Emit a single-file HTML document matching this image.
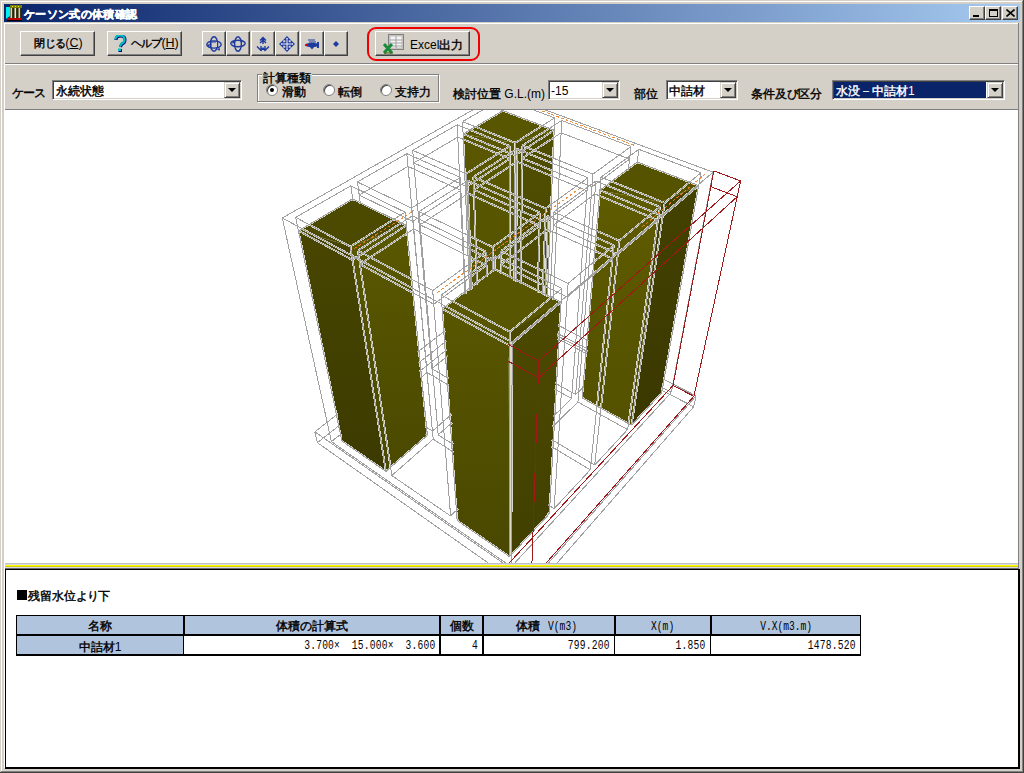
<!DOCTYPE html>
<html><head><meta charset="utf-8">
<style>
@font-face{font-family:"LJ";src:local("Liberation Sans");unicode-range:U+3000-30FF,U+3400-9FFF,U+FF00-FFEF;size-adjust:130%}
@font-face{font-family:"LJ";font-weight:bold;src:local("Liberation Sans Bold");unicode-range:U+3000-30FF,U+3400-9FFF,U+FF00-FFEF;size-adjust:130%}
.j{-webkit-text-stroke:.4px}
.k{letter-spacing:-.08em;-webkit-text-stroke:.4px}
.t .k,.t .j{letter-spacing:.03em}
*{margin:0;padding:0;box-sizing:border-box}
html,body{width:1024px;height:773px;overflow:hidden;background:#D4D0C8;font-family:"LJ","Liberation Sans",sans-serif;font-size:12px;color:#000}
.a{position:absolute}
.btn{position:absolute;background:#D4D0C8;border-top:1px solid #fff;border-left:1px solid #fff;border-right:1px solid #404040;border-bottom:1px solid #404040;box-shadow:inset -1px -1px 0 #808080}
.combo{position:absolute;background:#fff;border-top:1px solid #808080;border-left:1px solid #808080;border-right:1px solid #fff;border-bottom:1px solid #fff;box-shadow:inset 1px 1px 0 #404040,inset -1px -1px 0 #D4D0C8}
.dd{position:absolute;top:1px;right:1px;width:16px;height:16px;background:#D4D0C8;border-top:1px solid #D4D0C8;border-left:1px solid #D4D0C8;border-right:1px solid #404040;border-bottom:1px solid #404040;box-shadow:inset 1px 1px 0 #fff,inset -1px -1px 0 #808080}
.dd:after{content:"";position:absolute;left:3px;top:5px;border-left:4px solid transparent;border-right:4px solid transparent;border-top:4px solid #000}
.lbl{position:absolute;font-size:12px;line-height:14px;white-space:nowrap;margin-top:1px}
.radio{position:absolute;width:12px;height:12px;border-radius:50%;background:#fff;border:1px solid #808080;box-shadow:inset 1px 1px 0 #404040}
.th{position:absolute;background:#B0C4DE;text-align:center;font-size:12px;line-height:17px;padding-top:2px}
.td{position:absolute;background:#fff;text-align:right;font-family:"Liberation Mono",monospace;font-size:13px;line-height:18px;padding-right:4px;padding-top:1px;white-space:nowrap}
.td span{display:inline-block;transform:scaleX(.74);transform-origin:100% 50%;letter-spacing:.3px}
.x{font-weight:normal;letter-spacing:8px}
.m{font-family:"Liberation Mono",monospace;font-size:13px;display:inline-block;transform:scaleX(.74);transform-origin:50% 50%}
</style></head><body>
<!-- window frame -->
<div class="a" style="left:1px;top:1px;width:1021px;height:1px;background:#fff"></div>
<div class="a" style="left:1px;top:1px;width:1px;height:770px;background:#fff"></div>
<div class="a" style="left:1022px;top:1px;width:1px;height:771px;background:#808080"></div>
<div class="a" style="left:1023px;top:0;width:1px;height:773px;background:#404040"></div>
<div class="a" style="left:1px;top:771px;width:1022px;height:1px;background:#808080"></div>
<div class="a" style="left:0;top:772px;width:1024px;height:1px;background:#404040"></div>

<!-- title bar -->
<div class="a" style="left:4px;top:4px;width:1016px;height:18px;background:linear-gradient(to right,#0A246A,#A6CAF0)"></div>
<div class="a" id="ticon" style="left:6px;top:5px;width:16px;height:16px"><svg width="16" height="16"><polygon points="0,2 4,2 4,11 0,14" fill="#00F0F0"/><rect x="4" y="0" width="12" height="3" fill="#7A7A00"/><rect x="6" y="1" width="1" height="1" fill="#E8E800"/><rect x="9" y="1" width="1" height="1" fill="#E8E800"/><rect x="12" y="1" width="1" height="1" fill="#E8E800"/><rect x="4" y="3" width="12" height="10" fill="#2A2A00"/><rect x="4.5" y="3" width="1.6" height="10" fill="#D8D8D8"/><rect x="8.5" y="3" width="1.6" height="10" fill="#E8E8E8"/><rect x="12.5" y="3" width="1.6" height="10" fill="#C8C8C8"/><rect x="1" y="13" width="15" height="2" fill="#C00000"/><rect x="1" y="15" width="15" height="1" fill="#000"/></svg></div>
<div class="lbl t" style="left:24px;top:6px;color:#fff;font-weight:bold;font-size:11.3px"><span class="k">ケーソン</span><span class="j">式</span><span class="k">の</span><span class="j">体積確認</span></div>
<div class="btn" style="left:969px;top:6px;width:16px;height:14px"><div class="a" style="left:3px;top:8px;width:6px;height:2px;background:#000"></div></div>
<div class="btn" style="left:985px;top:6px;width:16px;height:14px"><div class="a" style="left:3px;top:2px;width:9px;height:8px;border:1px solid #000;border-top-width:2px"></div></div>
<div class="btn" style="left:1002px;top:6px;width:16px;height:14px"><svg class="a" style="left:3px;top:2px" width="9" height="8"><path d="M0.5 0.5L8.5 7.5M8.5 0.5L0.5 7.5" stroke="#000" stroke-width="1.6"/></svg></div>

<!-- client edge lines -->
<div class="a" style="left:4px;top:23px;width:1015px;height:1px;background:#fff"></div>
<div class="a" style="left:4px;top:23px;width:1px;height:745px;background:#fff"></div>
<div class="a" style="left:1018px;top:23px;width:1px;height:745px;background:#808080"></div>

<!-- toolbar -->
<div class="a" style="left:5px;top:63px;width:1013px;height:1px;background:#808080"></div>
<div class="a" style="left:5px;top:64px;width:1013px;height:1px;background:#fff"></div>
<div class="btn" style="left:20px;top:31px;width:75px;height:25px"><div class="lbl" style="left:13px;top:3px;font-size:11px"><span class="j">閉</span><span class="k">じる</span><span style="font-size:12.5px">(<u>C</u>)</span></div></div>
<div class="btn" style="left:107px;top:31px;width:75px;height:25px">
<svg class="a" style="left:5px;top:3px" width="14" height="18"><path d="M3 5 Q3 1 7.5 1 Q12 1 12 5 Q12 8 8.5 9.5 L7.5 12" fill="none" stroke="#000080" stroke-width="3"/><path d="M2.5 4.5 Q2.5 0.5 7 0.5 Q11.5 0.5 11.5 4.5 Q11.5 7.5 8 9 L7 11.5" fill="none" stroke="#00C0C0" stroke-width="2.2"/><rect x="5.5" y="14" width="3.5" height="3" fill="#000080"/><rect x="5" y="13.5" width="3" height="2.5" fill="#00C0C0"/></svg>
<div class="lbl" style="left:23px;top:3px;font-size:11px"><span class="k">ヘルプ</span><span style="font-size:12.5px">(<u>H</u>)</span></div></div>
<div class="btn" style="left:202px;top:31px;width:24px;height:25px"><svg class="a" style="left:3px;top:4px" width="16" height="16"><ellipse cx="8" cy="8" rx="3.6" ry="7.2" fill="none" stroke="#1E3A9E" stroke-width="1.4"/><ellipse cx="8" cy="8.5" rx="7.2" ry="3.6" fill="none" stroke="#1E3A9E" stroke-width="1.4"/><rect x="5" y="6" width="6" height="5" fill="#D4D0C8"/><path d="M5 6 H10 M5 6 V11" stroke="#1E3A9E" stroke-width="1.2"/><path d="M0.5 9 L3 11.5 L4 8Z M11 14 L13.5 11.5 L14 14.5Z" fill="#1E3A9E"/></svg></div>
<div class="btn" style="left:226px;top:31px;width:24px;height:25px"><svg class="a" style="left:3px;top:4px" width="16" height="16"><ellipse cx="8" cy="8" rx="3.4" ry="7.2" fill="none" stroke="#1E3A9E" stroke-width="1.4"/><ellipse cx="8" cy="7.5" rx="7.2" ry="3.2" fill="none" stroke="#1E3A9E" stroke-width="1.4"/><path d="M10 2.5 L13 5 L10.5 6Z M2 7.5 L3.5 4.5 L5 7Z" fill="#1E3A9E"/></svg></div>
<div class="btn" style="left:251px;top:31px;width:24px;height:25px"><svg class="a" style="left:3px;top:4px" width="16" height="16"><path d="M8 1 V8 M5 4.5 L8 1.5 L11 4.5 M5 7 L8 4 L11 7 M2 10.5 L6 14.5 L8 12 L10 14.5 L14 10.5 M6 10 V14 M10 10 V14" fill="none" stroke="#1E3A9E" stroke-width="1.4"/></svg></div>
<div class="btn" style="left:275px;top:31px;width:24px;height:25px"><svg class="a" style="left:3px;top:4px" width="16" height="16"><path d="M8 0.8 L10.6 3.6 H9.1 V6.9 H12.4 V5.4 L15.2 8 L12.4 10.6 V9.1 H9.1 V12.4 H10.6 L8 15.2 L5.4 12.4 H6.9 V9.1 H3.6 V10.6 L0.8 8 L3.6 5.4 V6.9 H6.9 V3.6 H5.4Z" fill="#F4F4FF" stroke="#1E3A9E" stroke-width="1.2"/></svg></div>
<div class="btn" style="left:300px;top:31px;width:24px;height:25px"><svg class="a" style="left:3px;top:4px" width="16" height="16"><path d="M4 4 H11 M5 6 H12" stroke="#1E3A9E" stroke-width="1.2"/><ellipse cx="8" cy="9" rx="7.2" ry="2.2" fill="#1E3A9E"/><rect x="13" y="6" width="2" height="6" fill="#1E3A9E"/><path d="M6 11 L8 13.5 L10 11Z" fill="#1E3A9E"/><rect x="1.5" y="8" width="2" height="2" fill="#E00000"/></svg></div>
<div class="btn" style="left:324px;top:31px;width:24px;height:25px"><svg class="a" style="left:3px;top:4px" width="16" height="16"><path d="M8 5 L11 8 L8 11 L5 8Z" fill="#1E3A9E"/></svg></div>
<div class="a" style="left:367px;top:27px;width:113px;height:34px;border:2px solid #F00000;border-radius:9px"></div>
<div class="btn" style="left:375px;top:31px;width:95px;height:25px">
<svg class="a" style="left:7px;top:2px" width="24" height="21"><rect x="5.5" y="0.5" width="15" height="15" fill="#D4D0C8" stroke="#808080"/><rect x="7" y="2" width="12" height="12" fill="#F4F4F4" stroke="#A0A0A0" stroke-width="0.6"/><path d="M7 6 H19 M7 9 H19 M7 12 H19 M13 2 V14" stroke="#909090" stroke-width="0.8"/><path d="M1 10 L9 19 M9 10 L1 19" stroke="#1C8C3C" stroke-width="3"/><path d="M1 19 H10" stroke="#406000" stroke-width="1"/></svg>
<div class="lbl" style="left:34px;top:5px">Excel<span class="j">出力</span></div></div>


<!-- combo row -->
<div class="a" style="left:5px;top:109px;width:1013px;height:1px;background:#808080"></div>
<div class="lbl" style="left:12px;top:85px"><span class="k">ケース</span></div>
<div class="combo" style="left:52px;top:80px;width:190px;height:20px"><div class="lbl" style="left:3px;top:2px"><span class="j">永続状態</span></div><div class="dd"></div></div>
<div class="a" style="left:257px;top:74px;width:182px;height:28px;border:1px solid #808080;box-shadow:1px 1px 0 #fff, inset 1px 1px 0 #fff"></div>
<div class="lbl" style="left:262px;top:70px;background:#D4D0C8;padding:0 1px"><span class="j">計算種類</span></div>
<div class="radio" style="left:266px;top:84px"><div class="a" style="left:3px;top:3px;width:4px;height:4px;border-radius:50%;background:#000"></div></div>
<div class="lbl" style="left:282px;top:84px"><span class="j">滑動</span></div>
<div class="radio" style="left:323px;top:84px"></div>
<div class="lbl" style="left:338px;top:84px"><span class="j">転倒</span></div>
<div class="radio" style="left:380px;top:84px"></div>
<div class="lbl" style="left:395px;top:84px"><span class="j">支持力</span></div>
<div class="lbl" style="left:453px;top:86px"><span class="j">検討位置</span> G.L.(m)</div>
<div class="combo" style="left:548px;top:80px;width:72px;height:20px"><div class="lbl" style="left:2px;top:2px">-15</div><div class="dd"></div></div>
<div class="lbl" style="left:634px;top:86px"><span class="j">部位</span></div>
<div class="combo" style="left:666px;top:80px;width:72px;height:20px"><div class="lbl" style="left:2px;top:2px"><span class="j">中詰材</span></div><div class="dd"></div></div>
<div class="lbl" style="left:751px;top:86px"><span class="j">条件及</span><span class="k">び</span><span class="j">区分</span></div>
<div class="combo" style="left:832px;top:80px;width:173px;height:20px"><div class="a" style="left:1px;top:1px;width:152px;height:16px;background:#0A246A"></div><div class="lbl" style="left:3px;top:2px;color:#fff"><span class="j">水没－中詰材</span>1</div><div class="dd"></div></div>


<!-- 3D view -->
<div class="a" style="left:5px;top:110px;width:1013px;height:453px;background:#fff;overflow:hidden" id="view"><svg width="1013" height="453" viewBox="5 110 1013 453" style="position:absolute;left:0;top:0;shape-rendering:crispEdges">
<g id="olive" style="shape-rendering:geometricPrecision"><defs><linearGradient id="gAl" x1="0" y1="0" x2="0" y2="1"><stop offset="0" stop-color="#484600"/><stop offset="1" stop-color="#3C3A00"/></linearGradient><linearGradient id="gAr" x1="0" y1="0" x2="0" y2="1"><stop offset="0" stop-color="#5A5800"/><stop offset="1" stop-color="#4A4900"/></linearGradient><linearGradient id="gBl" x1="0" y1="0" x2="0" y2="1"><stop offset="0" stop-color="#5A5700"/><stop offset="1" stop-color="#555200"/></linearGradient><linearGradient id="gBr" x1="0" y1="0" x2="0" y2="1"><stop offset="0" stop-color="#504E00"/><stop offset="1" stop-color="#4A4800"/></linearGradient><linearGradient id="gCl" x1="0" y1="0" x2="0" y2="1"><stop offset="0" stop-color="#5E5B00"/><stop offset="1" stop-color="#545100"/></linearGradient><linearGradient id="gCr" x1="0" y1="0" x2="0" y2="1"><stop offset="0" stop-color="#444200"/><stop offset="1" stop-color="#3A3800"/></linearGradient><linearGradient id="gDl" x1="0" y1="0" x2="0" y2="1"><stop offset="0" stop-color="#585600"/><stop offset="1" stop-color="#4A4800"/></linearGradient><linearGradient id="gDr" x1="0" y1="0" x2="0" y2="1"><stop offset="0" stop-color="#4C4A00"/><stop offset="1" stop-color="#424000"/></linearGradient></defs><polygon points="463.1,134.0 514.5,143.0 513.9,360.4 471.3,336.9" fill="url(#gBl)"/><polygon points="514.5,143.0 554.2,130.2 546.0,332.6 513.9,360.4" fill="url(#gBr)"/><polygon points="503.0,110.6 554.2,130.2 514.5,143.0 463.1,134.0" fill="#585600"/><polygon points="298.5,230.7 350.0,246.0 385.9,471.4 341.8,441.0" fill="url(#gAl)"/><polygon points="350.0,246.0 406.4,225.4 427.4,435.4 385.9,471.4" fill="url(#gAr)"/><polygon points="352.7,198.8 406.4,225.4 350.0,246.0 298.5,230.7" fill="#4C4A00"/><polygon points="599.9,190.2 661.2,202.0 631.6,425.3 582.0,397.9" fill="url(#gCl)"/><polygon points="661.2,202.0 698.7,185.5 661.7,392.9 631.6,425.3" fill="url(#gCr)"/><polygon points="637.3,162.0 698.7,185.5 661.2,202.0 599.9,190.2" fill="#555300"/><polygon points="442.1,308.7 508.6,332.8 509.6,556.7 457.1,520.5" fill="url(#gDl)"/><polygon points="508.6,332.8 561.1,302.1 549.4,513.8 509.6,556.7" fill="url(#gDr)"/><polygon points="494.7,269.2 561.1,302.1 508.6,332.8 442.1,308.7" fill="#585600"/></g>
<g id="wire" fill="none" stroke-width="1"><path d="M331.4 441.6L282.3 218.0M331.4 441.6L511.3 566.8M331.4 441.6L341.5 433.6M419.2 371.6L446.7 349.7M282.3 218.0L512.2 342.2M282.3 218.0L501.4 93.6M511.3 566.8L512.2 342.2M511.3 566.8L671.3 392.4M512.2 342.2L713.1 172.2M501.5 112.8L501.4 93.6M557.4 333.4L587.3 348.8M661.4 387.2L671.3 392.4M501.4 93.6L713.1 172.2M671.3 392.4L713.1 172.2M341.8 441.0L295.7 217.4M341.8 441.0L385.9 471.4M341.8 441.0L342.7 440.4M295.7 217.4L350.4 246.6M295.7 217.4L350.8 185.8M385.9 471.4L350.4 246.6M385.9 471.4L427.4 435.4M350.4 246.6L405.1 212.2M353.0 200.6L350.8 185.8M425.6 434.3L427.4 435.4M350.8 185.8L405.1 212.2M427.4 435.4L405.1 212.2M298.5 230.7L352.7 198.8M352.7 198.8L406.4 225.4M406.4 225.4L352.6 260.1M352.6 260.1L298.5 230.7M391.8 475.5L357.9 250.6M391.8 475.5L450.6 516.0M391.8 475.5L433.2 439.2M357.9 250.6L432.7 290.5M357.9 250.6L412.5 215.8M450.6 516.0L432.7 290.5M450.6 516.0L458.1 508.7M432.7 290.5L486.2 251.7M433.2 439.2L412.5 215.8M433.2 439.2L454.0 452.6M412.5 215.8L486.2 251.7M486.8 276.9L486.2 251.7M359.9 264.1L413.7 229.0M413.7 229.0L486.5 265.1M486.5 265.1L433.8 304.2M433.8 304.2L359.9 264.1M457.1 520.5L441.2 295.1M457.1 520.5L509.6 556.7M457.1 520.5L458.6 519.0M441.2 295.1L509.9 331.8M441.2 295.1L494.5 255.7M509.6 556.7L509.9 331.8M509.6 556.7L549.4 513.8M509.9 331.8L561.9 288.5M494.8 271.0L494.5 255.7M547.7 512.7L549.4 513.8M494.5 255.7L561.9 288.5M549.4 513.8L561.9 288.5M442.1 308.7L494.7 269.2M494.7 269.2L561.1 302.1M561.1 302.1L509.9 345.6M509.9 345.6L442.1 308.7M360.5 204.1L357.4 182.0M425.3 426.6L432.4 431.1M420.3 378.0L427.1 372.5M357.4 182.0L411.6 208.1M357.4 182.0L406.8 153.7M432.4 431.1L411.6 208.1M432.4 431.1L451.7 414.3M411.6 208.1L460.3 177.4M427.1 372.5L406.8 153.7M427.1 372.5L449.2 385.6M406.8 153.7L460.3 177.4M465.6 294.0L460.3 177.4M359.2 195.0L408.0 166.4M408.0 166.4L460.9 190.3M460.9 190.3L412.8 221.3M412.8 221.3L359.2 195.0M438.2 434.8L419.0 211.6M438.2 434.8L453.1 444.3M438.2 434.8L452.2 422.6M419.0 211.6L492.6 247.1M419.0 211.6L467.6 180.6M493.0 272.3L492.6 247.1M492.6 247.1L540.0 212.6M471.8 289.3L467.6 180.6M467.6 180.6L540.0 212.6M537.6 292.6L540.0 212.6M420.1 224.8L468.1 193.5M468.1 193.5L539.6 225.8M539.6 225.8L492.8 260.5M492.8 260.5L420.1 224.8M501.1 273.8L500.9 251.0M548.1 504.8L554.2 508.6M500.9 251.0L568.1 283.4M500.9 251.0L548.1 216.2M554.2 508.6L568.1 283.4M554.2 508.6L590.3 469.8M568.1 283.4L613.8 245.3M545.1 296.3L548.1 216.2M551.3 446.5L590.3 469.8M548.1 216.2L613.8 245.3M590.3 469.8L613.8 245.3M501.0 264.5L547.6 229.4M547.6 229.4L612.4 258.7M612.4 258.7L567.2 297.0M567.2 297.0L501.0 264.5M431.8 368.7L412.7 150.3M431.8 368.7L448.7 378.7M431.8 368.7L447.8 355.8M412.7 150.3L466.2 173.7M412.7 150.3L457.2 124.7M470.7 289.6L466.2 173.7M466.2 173.7L509.9 146.1M465.0 294.3L457.2 124.7M457.2 124.7L509.9 146.1M509.8 278.3L509.9 146.1M413.8 162.9L457.8 137.1M457.8 137.1L509.9 158.7M509.9 158.7L466.7 186.6M466.7 186.6L413.8 162.9M477.0 284.8L473.4 176.9M473.4 176.9L545.7 208.5M473.4 176.9L517.1 149.0M542.6 294.8L545.7 208.5M553.2 416.4L571.6 398.5M545.7 208.5L588.0 177.7M516.1 281.8L517.1 149.0M554.5 389.0L571.6 398.5M517.1 149.0L588.0 177.7M571.6 398.5L588.0 177.7M473.9 189.8L517.0 161.6M517.0 161.6L587.0 190.7M587.0 190.7L545.2 221.7M545.2 221.7L473.9 189.8M550.0 298.5L553.8 212.0M551.7 439.6L594.7 465.1M552.2 427.1L577.9 402.0M553.8 212.0L619.3 240.7M553.8 212.0L595.9 181.0M594.7 465.1L619.3 240.7M594.7 465.1L627.6 429.6M619.3 240.7L659.9 206.9M577.9 402.0L595.9 181.0M577.9 402.0L627.6 429.6M595.9 181.0L659.9 206.9M627.6 429.6L659.9 206.9M553.2 225.2L594.9 193.9M594.9 193.9L658.0 220.1M658.0 220.1L617.8 254.1M617.8 254.1L553.2 225.2M469.5 290.9L462.6 121.6M462.6 121.6L515.2 142.8M462.6 121.6L502.9 98.5M514.4 281.4L515.2 142.8M515.2 142.8L554.7 117.9M503.0 111.8L502.9 98.5M502.9 98.5L554.7 117.9M547.4 297.1L554.7 117.9M463.1 134.0L503.0 110.6M503.0 110.6L554.2 130.2M554.2 130.2L515.1 155.4M515.1 155.4L463.1 134.0M520.6 284.5L522.3 145.6M555.1 383.1L575.7 394.5M522.3 145.6L593.0 174.1M522.3 145.6L561.7 120.5M575.7 394.5L593.0 174.1M575.7 394.5L583.9 386.6M593.0 174.1L631.0 146.5M553.3 300.2L561.7 120.5M557.6 338.6L586.8 353.8M561.7 120.5L631.0 146.5M628.3 170.7L631.0 146.5M522.2 158.3L561.1 132.8M561.1 132.8L629.6 159.1M629.6 159.1L592.0 186.9M592.0 186.9L522.2 158.3M582.0 397.9L601.0 177.2M582.0 397.9L631.6 425.3M582.0 397.9L583.5 396.5M601.0 177.2L664.7 202.9M601.0 177.2L638.8 149.4M631.6 425.3L664.7 202.9M631.6 425.3L661.7 392.9M664.7 202.9L701.0 172.7M637.0 164.1L638.8 149.4M660.7 392.4L661.7 392.9M638.8 149.4L701.0 172.7M661.7 392.9L701.0 172.7M599.8 190.2L637.3 162.0M637.3 162.0L698.7 185.5M698.7 185.5L662.8 216.0M662.8 216.0L599.8 190.2M317.4 442.7L314.8 431.8M317.4 442.7L530.8 593.0M317.4 442.7L339.4 425.3M418.6 362.9L446.4 341.0M314.8 431.8L531.2 582.6M314.8 431.8L337.9 413.9M417.5 352.1L445.4 330.5M530.8 593.0L531.2 582.6M530.8 593.0L693.7 406.8M531.2 582.6L696.1 395.9M557.2 335.8L587.6 351.6M660.9 389.8L693.7 406.8M558.0 325.2L588.5 340.8M663.1 379.1L696.1 395.9M693.7 406.8L696.1 395.9" stroke="#FFFFFF" stroke-width="2" opacity="0.8"/><path d="M331.4 441.6L282.3 218.0M331.4 441.6L511.3 566.8M331.4 441.6L341.5 433.6M419.2 371.6L446.7 349.7M282.3 218.0L512.2 342.2M282.3 218.0L501.4 93.6M511.3 566.8L512.2 342.2M511.3 566.8L671.3 392.4M512.2 342.2L713.1 172.2M501.5 112.8L501.4 93.6M557.4 333.4L587.3 348.8M661.4 387.2L671.3 392.4M501.4 93.6L713.1 172.2M671.3 392.4L713.1 172.2M341.8 441.0L295.7 217.4M341.8 441.0L385.9 471.4M341.8 441.0L342.7 440.4M295.7 217.4L350.4 246.6M295.7 217.4L350.8 185.8M385.9 471.4L350.4 246.6M385.9 471.4L427.4 435.4M350.4 246.6L405.1 212.2M353.0 200.6L350.8 185.8M425.6 434.3L427.4 435.4M350.8 185.8L405.1 212.2M427.4 435.4L405.1 212.2M298.5 230.7L352.7 198.8M352.7 198.8L406.4 225.4M406.4 225.4L352.6 260.1M352.6 260.1L298.5 230.7M391.8 475.5L357.9 250.6M391.8 475.5L450.6 516.0M391.8 475.5L433.2 439.2M357.9 250.6L432.7 290.5M357.9 250.6L412.5 215.8M450.6 516.0L432.7 290.5M450.6 516.0L458.1 508.7M432.7 290.5L486.2 251.7M433.2 439.2L412.5 215.8M433.2 439.2L454.0 452.6M412.5 215.8L486.2 251.7M486.8 276.9L486.2 251.7M359.9 264.1L413.7 229.0M413.7 229.0L486.5 265.1M486.5 265.1L433.8 304.2M433.8 304.2L359.9 264.1M457.1 520.5L441.2 295.1M457.1 520.5L509.6 556.7M457.1 520.5L458.6 519.0M441.2 295.1L509.9 331.8M441.2 295.1L494.5 255.7M509.6 556.7L509.9 331.8M509.6 556.7L549.4 513.8M509.9 331.8L561.9 288.5M494.8 271.0L494.5 255.7M547.7 512.7L549.4 513.8M494.5 255.7L561.9 288.5M549.4 513.8L561.9 288.5M442.1 308.7L494.7 269.2M494.7 269.2L561.1 302.1M561.1 302.1L509.9 345.6M509.9 345.6L442.1 308.7M360.5 204.1L357.4 182.0M425.3 426.6L432.4 431.1M420.3 378.0L427.1 372.5M357.4 182.0L411.6 208.1M357.4 182.0L406.8 153.7M432.4 431.1L411.6 208.1M432.4 431.1L451.7 414.3M411.6 208.1L460.3 177.4M427.1 372.5L406.8 153.7M427.1 372.5L449.2 385.6M406.8 153.7L460.3 177.4M465.6 294.0L460.3 177.4M359.2 195.0L408.0 166.4M408.0 166.4L460.9 190.3M460.9 190.3L412.8 221.3M412.8 221.3L359.2 195.0M438.2 434.8L419.0 211.6M438.2 434.8L453.1 444.3M438.2 434.8L452.2 422.6M419.0 211.6L492.6 247.1M419.0 211.6L467.6 180.6M493.0 272.3L492.6 247.1M492.6 247.1L540.0 212.6M471.8 289.3L467.6 180.6M467.6 180.6L540.0 212.6M537.6 292.6L540.0 212.6M420.1 224.8L468.1 193.5M468.1 193.5L539.6 225.8M539.6 225.8L492.8 260.5M492.8 260.5L420.1 224.8M501.1 273.8L500.9 251.0M548.1 504.8L554.2 508.6M500.9 251.0L568.1 283.4M500.9 251.0L548.1 216.2M554.2 508.6L568.1 283.4M554.2 508.6L590.3 469.8M568.1 283.4L613.8 245.3M545.1 296.3L548.1 216.2M551.3 446.5L590.3 469.8M548.1 216.2L613.8 245.3M590.3 469.8L613.8 245.3M501.0 264.5L547.6 229.4M547.6 229.4L612.4 258.7M612.4 258.7L567.2 297.0M567.2 297.0L501.0 264.5M431.8 368.7L412.7 150.3M431.8 368.7L448.7 378.7M431.8 368.7L447.8 355.8M412.7 150.3L466.2 173.7M412.7 150.3L457.2 124.7M470.7 289.6L466.2 173.7M466.2 173.7L509.9 146.1M465.0 294.3L457.2 124.7M457.2 124.7L509.9 146.1M509.8 278.3L509.9 146.1M413.8 162.9L457.8 137.1M457.8 137.1L509.9 158.7M509.9 158.7L466.7 186.6M466.7 186.6L413.8 162.9M477.0 284.8L473.4 176.9M473.4 176.9L545.7 208.5M473.4 176.9L517.1 149.0M542.6 294.8L545.7 208.5M553.2 416.4L571.6 398.5M545.7 208.5L588.0 177.7M516.1 281.8L517.1 149.0M554.5 389.0L571.6 398.5M517.1 149.0L588.0 177.7M571.6 398.5L588.0 177.7M473.9 189.8L517.0 161.6M517.0 161.6L587.0 190.7M587.0 190.7L545.2 221.7M545.2 221.7L473.9 189.8M550.0 298.5L553.8 212.0M551.7 439.6L594.7 465.1M552.2 427.1L577.9 402.0M553.8 212.0L619.3 240.7M553.8 212.0L595.9 181.0M594.7 465.1L619.3 240.7M594.7 465.1L627.6 429.6M619.3 240.7L659.9 206.9M577.9 402.0L595.9 181.0M577.9 402.0L627.6 429.6M595.9 181.0L659.9 206.9M627.6 429.6L659.9 206.9M553.2 225.2L594.9 193.9M594.9 193.9L658.0 220.1M658.0 220.1L617.8 254.1M617.8 254.1L553.2 225.2M469.5 290.9L462.6 121.6M462.6 121.6L515.2 142.8M462.6 121.6L502.9 98.5M514.4 281.4L515.2 142.8M515.2 142.8L554.7 117.9M503.0 111.8L502.9 98.5M502.9 98.5L554.7 117.9M547.4 297.1L554.7 117.9M463.1 134.0L503.0 110.6M503.0 110.6L554.2 130.2M554.2 130.2L515.1 155.4M515.1 155.4L463.1 134.0M520.6 284.5L522.3 145.6M555.1 383.1L575.7 394.5M522.3 145.6L593.0 174.1M522.3 145.6L561.7 120.5M575.7 394.5L593.0 174.1M575.7 394.5L583.9 386.6M593.0 174.1L631.0 146.5M553.3 300.2L561.7 120.5M557.6 338.6L586.8 353.8M561.7 120.5L631.0 146.5M628.3 170.7L631.0 146.5M522.2 158.3L561.1 132.8M561.1 132.8L629.6 159.1M629.6 159.1L592.0 186.9M592.0 186.9L522.2 158.3M582.0 397.9L601.0 177.2M582.0 397.9L631.6 425.3M582.0 397.9L583.5 396.5M601.0 177.2L664.7 202.9M601.0 177.2L638.8 149.4M631.6 425.3L664.7 202.9M631.6 425.3L661.7 392.9M664.7 202.9L701.0 172.7M637.0 164.1L638.8 149.4M660.7 392.4L661.7 392.9M638.8 149.4L701.0 172.7M661.7 392.9L701.0 172.7M599.8 190.2L637.3 162.0M637.3 162.0L698.7 185.5M698.7 185.5L662.8 216.0M662.8 216.0L599.8 190.2M317.4 442.7L314.8 431.8M317.4 442.7L530.8 593.0M317.4 442.7L339.4 425.3M418.6 362.9L446.4 341.0M314.8 431.8L531.2 582.6M314.8 431.8L337.9 413.9M417.5 352.1L445.4 330.5M530.8 593.0L531.2 582.6M530.8 593.0L693.7 406.8M531.2 582.6L696.1 395.9M557.2 335.8L587.6 351.6M660.9 389.8L693.7 406.8M558.0 325.2L588.5 340.8M663.1 379.1L696.1 395.9M693.7 406.8L696.1 395.9" stroke="#A0A0A0"/><path d="M538.8 360.9L740.6 180.9M538.3 377.9L737.2 196.7M508.5 563.7L673.0 385.5M531.4 579.7L693.9 396.3M508.5 344.5L538.8 360.9M508.5 361.4L538.3 377.9M713.8 170.9L740.6 180.9M710.8 186.7L737.2 196.7M673.0 385.5L693.9 396.3M673.0 385.5L713.8 170.9M693.9 396.3L740.6 180.9M531.4 579.7L538.8 360.9" stroke="#A01818"/><path d="M354.2 248.6L413.9 210.7M436.9 292.8L581.6 186.9M642.1 226.9L705.0 174.2M542.1 110.9L633.8 145.1" stroke="#F08020" stroke-dasharray="3 2" opacity="0.9"/></g>
</svg></div>

<!-- splitter -->
<div class="a" style="left:5px;top:563px;width:1013px;height:1px;background:#C0C0C0"></div>
<div class="a" style="left:5px;top:564px;width:1013px;height:1px;background:#D8D8E8"></div>
<div class="a" style="left:5px;top:565px;width:1013px;height:1px;background:#FFFF00"></div>
<div class="a" style="left:5px;top:566px;width:1013px;height:1px;background:#D4D000"></div>
<div class="a" style="left:5px;top:567px;width:1013px;height:1px;background:#D8D8E8"></div>
<div class="a" style="left:5px;top:568px;width:1013px;height:1px;background:#6A6A6A"></div>

<!-- bottom panel -->
<div class="a" style="left:5px;top:569px;width:1015px;height:200px;background:#fff;border-top:1px solid #000;border-left:1px solid #000;border-right:2px solid #000;border-bottom:2px solid #000" id="bottom"></div>
<div class="a" style="left:17px;top:590px;width:10px;height:10px;background:#000"></div><div class="lbl" style="left:28px;top:588px"><span class="j">残留水位</span><span class="k">より</span><span class="j">下</span></div>
<div class="a" style="left:16px;top:615px;width:845px;height:41px;background:#000"></div>
<div class="th" style="left:17px;top:616px;width:166px;height:18px"><span class="j">名称</span></div>
<div class="th" style="left:185px;top:616px;width:254px;height:18px"><span class="j">体積</span><span class="k">の</span><span class="j">計算式</span></div>
<div class="th" style="left:441px;top:616px;width:41px;height:18px"><span class="j">個数</span></div>
<div class="th" style="left:484px;top:616px;width:130px;height:18px"><span class="j">体積</span> <span class="m">V(m3)</span></div>
<div class="th" style="left:616px;top:616px;width:94px;height:18px"><span class="m">X(m)</span></div>
<div class="th" style="left:712px;top:616px;width:148px;height:18px"><span class="m">V.X(m3.m)</span></div>
<div class="th" style="left:17px;top:636px;width:166px;height:18px;padding-top:3px"><span class="j">中詰材</span>1</div>
<div class="td" style="left:184px;top:636px;width:255px;height:18px"><span>3.700<b class="x">×</b> 15.000<b class="x">×</b> 3.600</span></div>
<div class="td" style="left:441px;top:636px;width:41px;height:18px"><span>4</span></div>
<div class="td" style="left:484px;top:636px;width:130px;height:18px"><span>799.200</span></div>
<div class="td" style="left:615px;top:636px;width:95px;height:18px"><span>1.850</span></div>
<div class="td" style="left:711px;top:636px;width:149px;height:18px"><span>1478.520</span></div>

</body></html>
